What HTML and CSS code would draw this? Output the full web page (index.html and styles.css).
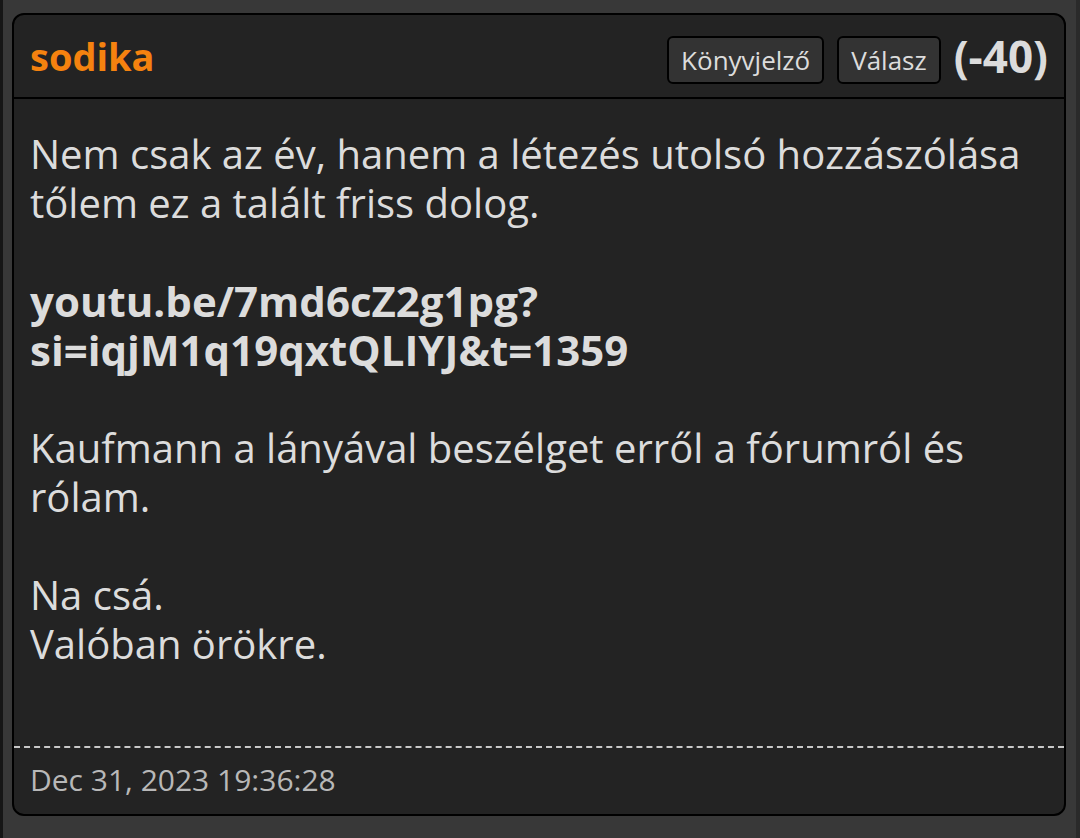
FILE: index.html
```html
<!DOCTYPE html>
<html lang="hu">
<head>
<meta charset="UTF-8">
<meta name="viewport" content="width=device-width, initial-scale=1.0">
<title>sodika hozzászólása</title>
<link rel="stylesheet" href="styles.css">
</head>
<body>
<div class="page">
    <div class="post">
        <div class="post-head">
            <span class="author">sodika</span>
            <div class="actions">
                <button class="btn">Könyvjelző</button>
                <button class="btn">Válasz</button>
                <span class="score">(-40)</span>
            </div>
        </div>
        <div class="post-body">
            <p>Nem csak az év, hanem a létezés utolsó hozzászólása tőlem ez a talált friss dolog.</p>
            <p class="link">youtu.be/7md6cZ2g1pg?
si=iqjM1q19qxtQLIYJ&amp;t=1359</p>
            <p>Kaufmann a lányával beszélget erről a fórumról és rólam.</p>
            <p>Na csá.
Valóban örökre.</p>
        </div>
        <div class="post-foot">Dec 31, 2023 19:36:28</div>
    </div>
</div>
</body>
</html>
```

FILE: styles.css
```css
html, body {
    margin: 0;
    padding: 0;
    height: 100%;
}
body {
    font-family: "Open Sans", "Noto Sans", sans-serif;
    background-color: #383838;
    color: #dcdcdc;
}
.page {
    box-sizing: border-box;
    height: 100%;
    padding: 13px 10px 0 9px;
    border-left: 3px solid #161616;
    border-right: 4px solid #2a2a2a;
}
.post {
    background-color: #232323;
    border: 2px solid #000;
    border-radius: 12px;
}
.post-head {
    display: flex;
    align-items: center;
    justify-content: space-between;
    height: 82px;
    padding: 0 16px;
    border-bottom: 2px solid #000;
}
.author {
    color: #f5820f;
    font-size: 38px;
    font-weight: bold;
}
.actions {
    display: flex;
    align-items: center;
    gap: 13px;
}
.btn {
    font-family: inherit;
    font-size: 26px;
    color: #dcdcdc;
    background-color: #333;
    border: 2px solid #000;
    border-radius: 6px;
    height: 48px;
    padding: 0 12px;
    margin-top: 8px;
}
.score {
    font-size: 44px;
    font-weight: bold;
    color: #dcdcdc;
}
.post-body {
    padding: 30px 16px 78px 16px;
    font-size: 40px;
    line-height: 49px;
}
.post-body p {
    margin: 0 0 49px 0;
    white-space: pre-line;
}
.post-body p:last-child {
    margin-bottom: 0;
}
.link {
    font-weight: bold;
    font-size: 42px;
}
.post-foot {
    border-top: 2px dashed #c8c8c8;
    padding: 12px 16px 14px 16px;
    font-size: 30px;
    line-height: 40px;
    color: #b8b8b8;
}
```
